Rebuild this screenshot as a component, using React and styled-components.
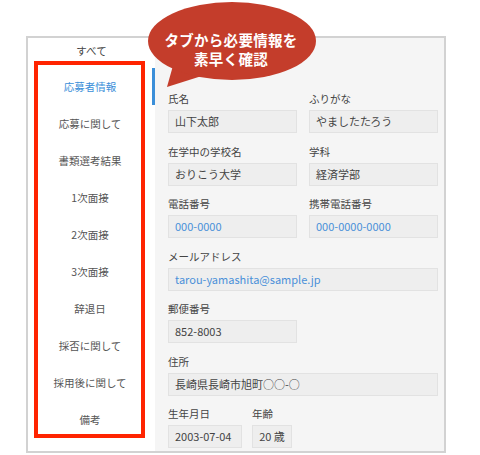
import React from "react";
import styled, { createGlobalStyle } from "styled-components";

const GlobalStyle = createGlobalStyle`
    html, body {
        margin: 0;
        padding: 0;
        background: #fff;
    }
    body {
        font-family: "Noto Sans CJK JP", "Noto Sans", sans-serif;
        color: #444;
    }
    * {
        box-sizing: border-box;
    }
`;

const Stage = styled.div`
    position: relative;
    width: 480px;
    height: 455px;
    padding: 36px 0 0 26px;
    overflow: hidden;
`;

const Panel = styled.div`
    width: 420px;
    height: 417px;
    border: 2px solid #d2d2d2;
    display: flex;
    background: #fff;
`;

const Nav = styled.div`
    width: 127px;
    display: flex;
    flex-direction: column;
`;

const AllTab = styled.div`
    height: 24px;
    margin-bottom: 6px;
    display: flex;
    align-items: center;
    justify-content: center;
    font-size: 10.5px;
    color: #444;
`;

const NavItem = styled.div`
    height: 37px;
    display: flex;
    align-items: center;
    justify-content: center;
    font-size: 10.5px;
    color: ${props => (props.active ? "#3b8fd9" : "#555")};
    border-right: 3px solid ${props => (props.active ? "#3b8fd9" : "transparent")};
`;

const Content = styled.div`
    flex: 1;
    background: #f5f5f5;
    padding: 53px 0 0 13px;
    display: flex;
    flex-direction: column;
    gap: 10.5px;
`;

const Row = styled.div`
    display: flex;
    gap: ${props => props.gap || 12}px;
`;

const Field = styled.div`
    width: ${props => props.width}px;
    display: flex;
    flex-direction: column;
`;

const Label = styled.div`
    font-size: 10.5px;
    line-height: 16px;
    height: 16px;
    margin-bottom: 3px;
    color: #444;
    white-space: nowrap;
`;

const Value = styled.div`
    height: 23px;
    border: 1px solid #e2e2e2;
    background: #eeeeee;
    padding: 0 6px;
    font-size: 11px;
    line-height: 21px;
    white-space: nowrap;
    text-align: ${props => (props.center ? "center" : "left")};
    color: ${props => (props.link ? "#4a90d9" : "#444")};
`;

const Highlight = styled.div`
    position: absolute;
    left: 34px;
    top: 61px;
    width: 111px;
    height: 377px;
    border: 4px solid #ff2400;
    pointer-events: none;
`;

const Bubble = styled.div`
    position: absolute;
    left: 146px;
    top: 0;
    width: 174px;
    height: 90px;
    svg {
        position: absolute;
        left: 0;
        top: 0;
    }
`;

const BubbleText = styled.div`
    position: relative;
    padding-top: 30px;
    padding-right: 4px;
    display: flex;
    flex-direction: column;
    align-items: center;
    font-size: 14.5px;
    font-weight: bold;
    color: #fff;
    letter-spacing: 0.3px;
    span {
        display: block;
        line-height: 19px;
        height: 19px;
    }
`;

const tabs = [
    "応募者情報",
    "応募に関して",
    "書類選考結果",
    "1次面接",
    "2次面接",
    "3次面接",
    "辞退日",
    "採否に関して",
    "採用後に関して",
    "備考"
];

const Speech = () => (
    <Bubble>
        <svg width="174" height="90" viewBox="0 0 174 90">
            <path d="M28 62 L21 87 L62 74 Z" fill="#c43d2b" />
            <ellipse cx="86" cy="41" rx="84" ry="39" fill="#c43d2b" />
        </svg>
        <BubbleText>
            <span>タブから必要情報を</span>
            <span>素早く確認</span>
        </BubbleText>
    </Bubble>
);

const App = () => (
    <>
        <GlobalStyle />
        <Stage>
            <Panel>
                <Nav>
                    <AllTab>すべて</AllTab>
                    {tabs.map((t, i) => (
                        <NavItem key={t} active={i === 0}>
                            {t}
                        </NavItem>
                    ))}
                </Nav>
                <Content>
                    <Row>
                        <Field width={129}>
                            <Label>氏名</Label>
                            <Value>山下太郎</Value>
                        </Field>
                        <Field width={129}>
                            <Label>ふりがな</Label>
                            <Value>やましたたろう</Value>
                        </Field>
                    </Row>
                    <Row>
                        <Field width={129}>
                            <Label>在学中の学校名</Label>
                            <Value>おりこう大学</Value>
                        </Field>
                        <Field width={129}>
                            <Label>学科</Label>
                            <Value>経済学部</Value>
                        </Field>
                    </Row>
                    <Row>
                        <Field width={129}>
                            <Label>電話番号</Label>
                            <Value link>000-0000</Value>
                        </Field>
                        <Field width={129}>
                            <Label>携帯電話番号</Label>
                            <Value link>000-0000-0000</Value>
                        </Field>
                    </Row>
                    <Row>
                        <Field width={270}>
                            <Label>メールアドレス</Label>
                            <Value link>tarou-yamashita@sample.jp</Value>
                        </Field>
                    </Row>
                    <Row>
                        <Field width={129}>
                            <Label>郵便番号</Label>
                            <Value>852-8003</Value>
                        </Field>
                    </Row>
                    <Row>
                        <Field width={270}>
                            <Label>住所</Label>
                            <Value>長崎県長崎市旭町○○-○</Value>
                        </Field>
                    </Row>
                    <Row gap={10}>
                        <Field width={74}>
                            <Label>生年月日</Label>
                            <Value>2003-07-04</Value>
                        </Field>
                        <Field width={40}>
                            <Label>年齢</Label>
                            <Value center>20 歳</Value>
                        </Field>
                    </Row>
                </Content>
            </Panel>
            <Highlight />
            <Speech />
        </Stage>
    </>
);

export default App;
